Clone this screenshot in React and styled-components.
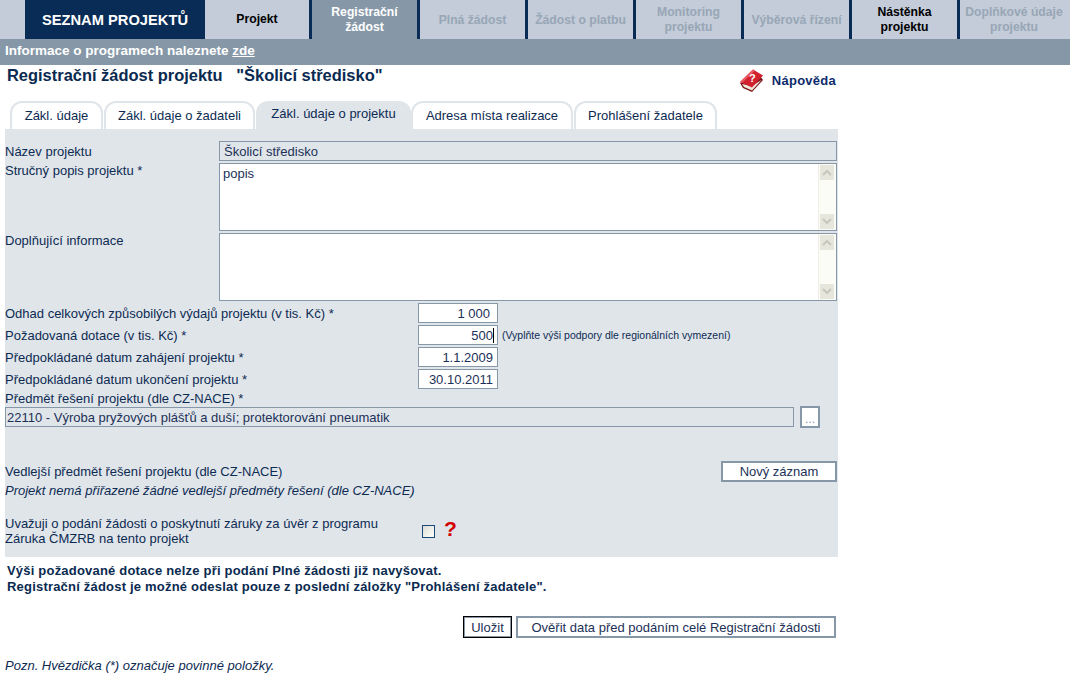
import React from "react";
import styled, { createGlobalStyle } from "styled-components";

const GlobalStyle = createGlobalStyle`
  html, body {
    margin: 0;
    padding: 0;
    background: #fff;
    font-family: "Liberation Sans", Arial, sans-serif;
    font-size: 13px;
    color: #0d2b52;
  }
`;

const Page = styled.div`
  width: 1070px;
  height: 679px;
  overflow: hidden;
`;
const Nav = styled.nav`
  display: flex;
  height: 39px;
  background: #c3ccd8;
  padding-left: 25px;
`;
const HomeTab = styled.div`
  width: 180px;
  background: #082c55;
  color: #fff;
  font-weight: bold;
  font-size: 14.7px;
  display: flex;
  align-items: center;
  justify-content: center;
`;
const NavTab = styled.div`
  box-sizing: border-box;
  width: 108px;
  display: flex;
  align-items: center;
  justify-content: center;
  text-align: center;
  font-weight: bold;
  font-size: 12.2px;
  line-height: 15px;
  padding: 1px 2px 0;
  border-right: ${(p) => (p.$plain ? "0" : "3px solid #082c55")};
  color: ${(p) =>
    p.$state === "active" ? "#fff" : p.$state === "off" ? "#98a6b6" : "#000"};
  background: ${(p) => (p.$state === "active" ? "#8698a8" : "transparent")};
`;
const FirstTab = styled(NavTab)`
  width: 107px;
  padding: 0 2px 1px;
`;
const InfoBar = styled.div`
  height: 26px;
  background: #8698a8;
  color: #fff;
  font-weight: bold;
  font-size: 13.5px;
  line-height: 24px;
  padding-left: 5px;
  a {
    color: #fff;
    text-decoration: underline;
  }
`;
const TitleRow = styled.div`
  box-sizing: border-box;
  display: flex;
  width: 836px;
  height: 36px;
  padding-left: 7px;
`;
const Title = styled.h1`
  flex: 1;
  margin: 0;
  font-size: 16.45px;
  line-height: 20px;
  color: #0a2a50;
  white-space: pre;
`;
const HelpLink = styled.div`
  display: flex;
  align-items: center;
  gap: 7px;
  height: 26px;
  margin-top: 2px;
  font-weight: bold;
  font-size: 13px;
  letter-spacing: 0.25px;
  color: #0d2b6b;
`;
const TabStrip = styled.div`
  display: flex;
  height: 28px;
  padding-left: 10px;
  align-items: flex-end;
`;
const Tab = styled.div`
  box-sizing: border-box;
  height: 28px;
  width: ${(p) => p.$w}px;
  margin-right: ${(p) => p.$gap ?? 1}px;
  display: flex;
  align-items: center;
  justify-content: center;
  border-radius: 12px 12px 0 0;
  padding-bottom: ${(p) => (p.$active ? 4 : 2)}px;
  background: ${(p) => (p.$active ? "#e0e5ea" : "#fff")};
  border: ${(p) => (p.$active ? "0" : "2px solid #e0e5ea")};
  border-bottom: 0;
`;
const Panel = styled.section`
  box-sizing: border-box;
  width: 833px;
  height: 428px;
  margin-left: 5px;
  padding-top: 12px;
  background: #e0e5ea;
`;
const Row = styled.div`
  display: flex;
  align-items: ${(p) => (p.$top ? "flex-start" : "center")};
  margin-bottom: ${(p) => p.$mb ?? 2}px;
`;
const Label = styled.label`
  width: ${(p) => p.$w ?? 214}px;
  flex-shrink: 0;
  line-height: 15px;
`;
const Field = styled.div`
  box-sizing: border-box;
  width: ${(p) => p.$w}px;
  height: 20px;
  border: 1px solid #8698a8;
  background: ${(p) => (p.$readOnly ? "#e0e5ea" : "#fff")};
  padding: 1px ${(p) => p.$pr ?? 1}px 0 ${(p) => (p.$inset ? 4 : 1)}px;
  line-height: 18px;
  text-align: ${(p) => (p.$pr ? "right" : "left")};
  color: #1c3157;
  white-space: nowrap;
`;
const Caret = styled.span`
  border-right: 1px solid #000;
  margin-right: -1px;
`;
const AreaBox = styled.div`
  box-sizing: border-box;
  width: 618px;
  height: 68px;
  border: 1px solid #8698a8;
  background: #fff;
  display: flex;
`;
const AreaText = styled.div`
  flex: 1;
  padding: 2px 3px;
  line-height: 15px;
  color: #1c3157;
`;
const Scrollbar = styled.div`
  width: 16px;
  background: #fcfcf6;
  border-left: 1px solid #eeeee6;
  display: flex;
  flex-direction: column;
  justify-content: space-between;
  padding: 1px 1px 1px 0;
`;
const ScrollBtn = styled.div`
  width: 14px;
  height: 15px;
  margin-left: 1px;
  background: #e6e6dc;
  display: flex;
  align-items: center;
  justify-content: center;
`;
const Note = styled.span`
  margin-left: 4px;
  font-size: 10.5px;
`;
const SmallLabel = styled(Label)`
  display: block;
  width: auto;
`;
const DotsButton = styled.button`
  box-sizing: border-box;
  width: 20px;
  height: 22px;
  margin-left: 6px;
  border: 2px solid #8698a8;
  background: #fff;
  padding: 0;
  font: 12px "Liberation Sans", Arial, sans-serif;
  color: #8698a8;
  line-height: 22px;
`;
const Button = styled.button`
  box-sizing: border-box;
  height: ${(p) => p.$h ?? 22}px;
  width: ${(p) => p.$w}px;
  margin-left: ${(p) => p.$ml ?? 0}px;
  background: #fff;
  border: 2px solid #8698a8;
  outline: ${(p) => (p.$focus ? "1px solid #000" : "0")};
  outline-offset: -1px;
  padding: 0;
  font: 13px "Liberation Sans", Arial, sans-serif;
  color: #1c3157;
`;
const SecondaryRow = styled.div`
  display: flex;
  justify-content: space-between;
  align-items: flex-start;
  height: 22px;
  margin: 33px 1px 0 0;
  line-height: 21px;
`;
const Italic = styled.div`
  font-style: italic;
  line-height: 15px;
`;
const GuaranteeRow = styled.div`
  display: flex;
  align-items: center;
  margin-top: 18px;
  line-height: 15px;
`;
const GuaranteeText = styled.div`
  width: 417px;
`;
const Check = styled.span`
  box-sizing: border-box;
  width: 13px;
  height: 13px;
  border: 1px solid #1c4a78;
  background: linear-gradient(135deg, #dcdcd4, #fff);
`;
const Mark = styled.span`
  margin: -5px 0 0 9px;
  color: #d40000;
  font-weight: bold;
  font-size: 21px;
  line-height: 20px;
`;
const Warning = styled.div`
  margin: 6px 0 0 7px;
  font-weight: bold;
  line-height: 16px;
  letter-spacing: 0.2px;
  color: #0a2a50;
`;
const Actions = styled.div`
  display: flex;
  width: 836px;
  justify-content: flex-end;
  margin-top: 21px;
`;
const Footnote = styled.div`
  margin: 20px 0 0 5px;
  font-style: italic;
  line-height: 15px;
`;

const Arrow = ({ up }) => (
  <svg width="10" height="7" viewBox="0 0 10 7">
    <path
      d={up ? "M1 6L5 2L9 6" : "M1 1L5 5L9 1"}
      fill="none"
      stroke="#c6c6bc"
      strokeWidth="2"
    />
  </svg>
);

const TextArea = ({ children }) => (
  <AreaBox>
    <AreaText>{children}</AreaText>
    <Scrollbar>
      <ScrollBtn>
        <Arrow up />
      </ScrollBtn>
      <ScrollBtn>
        <Arrow />
      </ScrollBtn>
    </Scrollbar>
  </AreaBox>
);

const BookIcon = () => (
  <svg width="26" height="24" viewBox="0 0 26 24">
    <path d="M1 15L4 20L13 24L24 12L21 8Z" fill="#7a1418" />
    <path d="M3 16L5 19L13 22.5L22.5 12L13 18Z" fill="#eee8dc" />
    <path d="M1 14L14 1.5L24 7.5L13 19.5Z" fill="#d2202e" />
    <path d="M1 14L14 1.5L16 2.5L3 15Z" fill="#e85a62" />
    <text
      x="10"
      y="14"
      fontSize="11"
      fontWeight="bold"
      fontFamily="Liberation Sans"
      fill="#fff"
    >
      ?
    </text>
  </svg>
);

const navTabs = [
  { label: "Registrační žádost", state: "active" },
  { label: "Plná žádost", state: "off" },
  { label: "Žádost o platbu", state: "off" },
  { label: "Monitoring projektu", state: "off" },
  { label: "Výběrová řízení", state: "off" },
  { label: "Nástěnka projektu", state: "on" },
  { label: "Doplňkové údaje projektu", state: "off", plain: true },
];

const tabs = [
  { label: "Zákl. údaje", w: 93 },
  { label: "Zákl. údaje o žadateli", w: 151 },
  { label: "Zákl. údaje o projektu", w: 155, active: true, gap: 0 },
  { label: "Adresa místa realizace", w: 162 },
  { label: "Prohlášení žadatele", w: 143 },
];

export default function App() {
  return (
    <Page>
      <GlobalStyle />
      <Nav>
        <HomeTab>SEZNAM PROJEKTŮ</HomeTab>
        <FirstTab $state="on">Projekt</FirstTab>
        {navTabs.map((t) => (
          <NavTab key={t.label} $state={t.state} $plain={t.plain}>
            {t.label}
          </NavTab>
        ))}
      </Nav>
      <InfoBar>
        Informace o programech naleznete <a href="#zde">zde</a>
      </InfoBar>
      <TitleRow>
        <Title>Registrační žádost projektu   "Školicí středisko"</Title>
        <HelpLink>
          <BookIcon />
          Nápověda
        </HelpLink>
      </TitleRow>
      <TabStrip>
        {tabs.map((t) => (
          <Tab key={t.label} $w={t.w} $active={t.active} $gap={t.gap}>
            {t.label}
          </Tab>
        ))}
      </TabStrip>
      <Panel>
        <Row>
          <Label>Název projektu</Label>
          <Field $w={618} $readOnly $inset>
            Školicí středisko
          </Field>
        </Row>
        <Row $top>
          <Label>Stručný popis projektu *</Label>
          <TextArea>popis</TextArea>
        </Row>
        <Row $top>
          <Label>Doplňující informace</Label>
          <TextArea />
        </Row>
        <Row>
          <Label $w={413}>Odhad celkových způsobilých výdajů projektu (v tis. Kč) *</Label>
          <Field $w={80} $pr={7}>1 000</Field>
        </Row>
        <Row>
          <Label $w={413}>Požadovaná dotace (v tis. Kč) *</Label>
          <Field $w={80} $pr={4}>
            <Caret>500</Caret>
          </Field>
          <Note>(Vyplňte výši podpory dle regionálních vymezení)</Note>
        </Row>
        <Row>
          <Label $w={413}>Předpokládané datum zahájení projektu *</Label>
          <Field $w={80} $pr={4}>1.1.2009</Field>
        </Row>
        <Row>
          <Label $w={413}>Předpokládané datum ukončení projektu *</Label>
          <Field $w={80} $pr={4}>30.10.2011</Field>
        </Row>
        <SmallLabel>Předmět řešení projektu (dle CZ-NACE) *</SmallLabel>
        <Row $mb={0}>
          <Field $w={789} $readOnly>
            22110 - Výroba pryžových plášťů a duší; protektorování pneumatik
          </Field>
          <DotsButton>...</DotsButton>
        </Row>
        <SecondaryRow>
          <span>Vedlejší předmět řešení projektu (dle CZ-NACE)</span>
          <Button $w={116} $h={21}>Nový záznam</Button>
        </SecondaryRow>
        <Italic>Projekt nemá přiřazené žádné vedlejší předměty řešení (dle CZ-NACE)</Italic>
        <GuaranteeRow>
          <GuaranteeText>
            Uvažuji o podání žádosti o poskytnutí záruky za úvěr z programu
            <br />
            Záruka ČMZRB na tento projekt
          </GuaranteeText>
          <Check />
          <Mark>?</Mark>
        </GuaranteeRow>
      </Panel>
      <Warning>
        Výši požadované dotace nelze při podání Plné žádosti již navyšovat.
        <br />
        Registrační žádost je možné odeslat pouze z poslední záložky "Prohlášení žadatele".
      </Warning>
      <Actions>
        <Button $w={49} $focus>Uložit</Button>
        <Button $w={320} $ml={4}>Ověřit data před podáním celé Registrační žádosti</Button>
      </Actions>
      <Footnote>Pozn. Hvězdička (*) označuje povinné položky.</Footnote>
    </Page>
  );
}
